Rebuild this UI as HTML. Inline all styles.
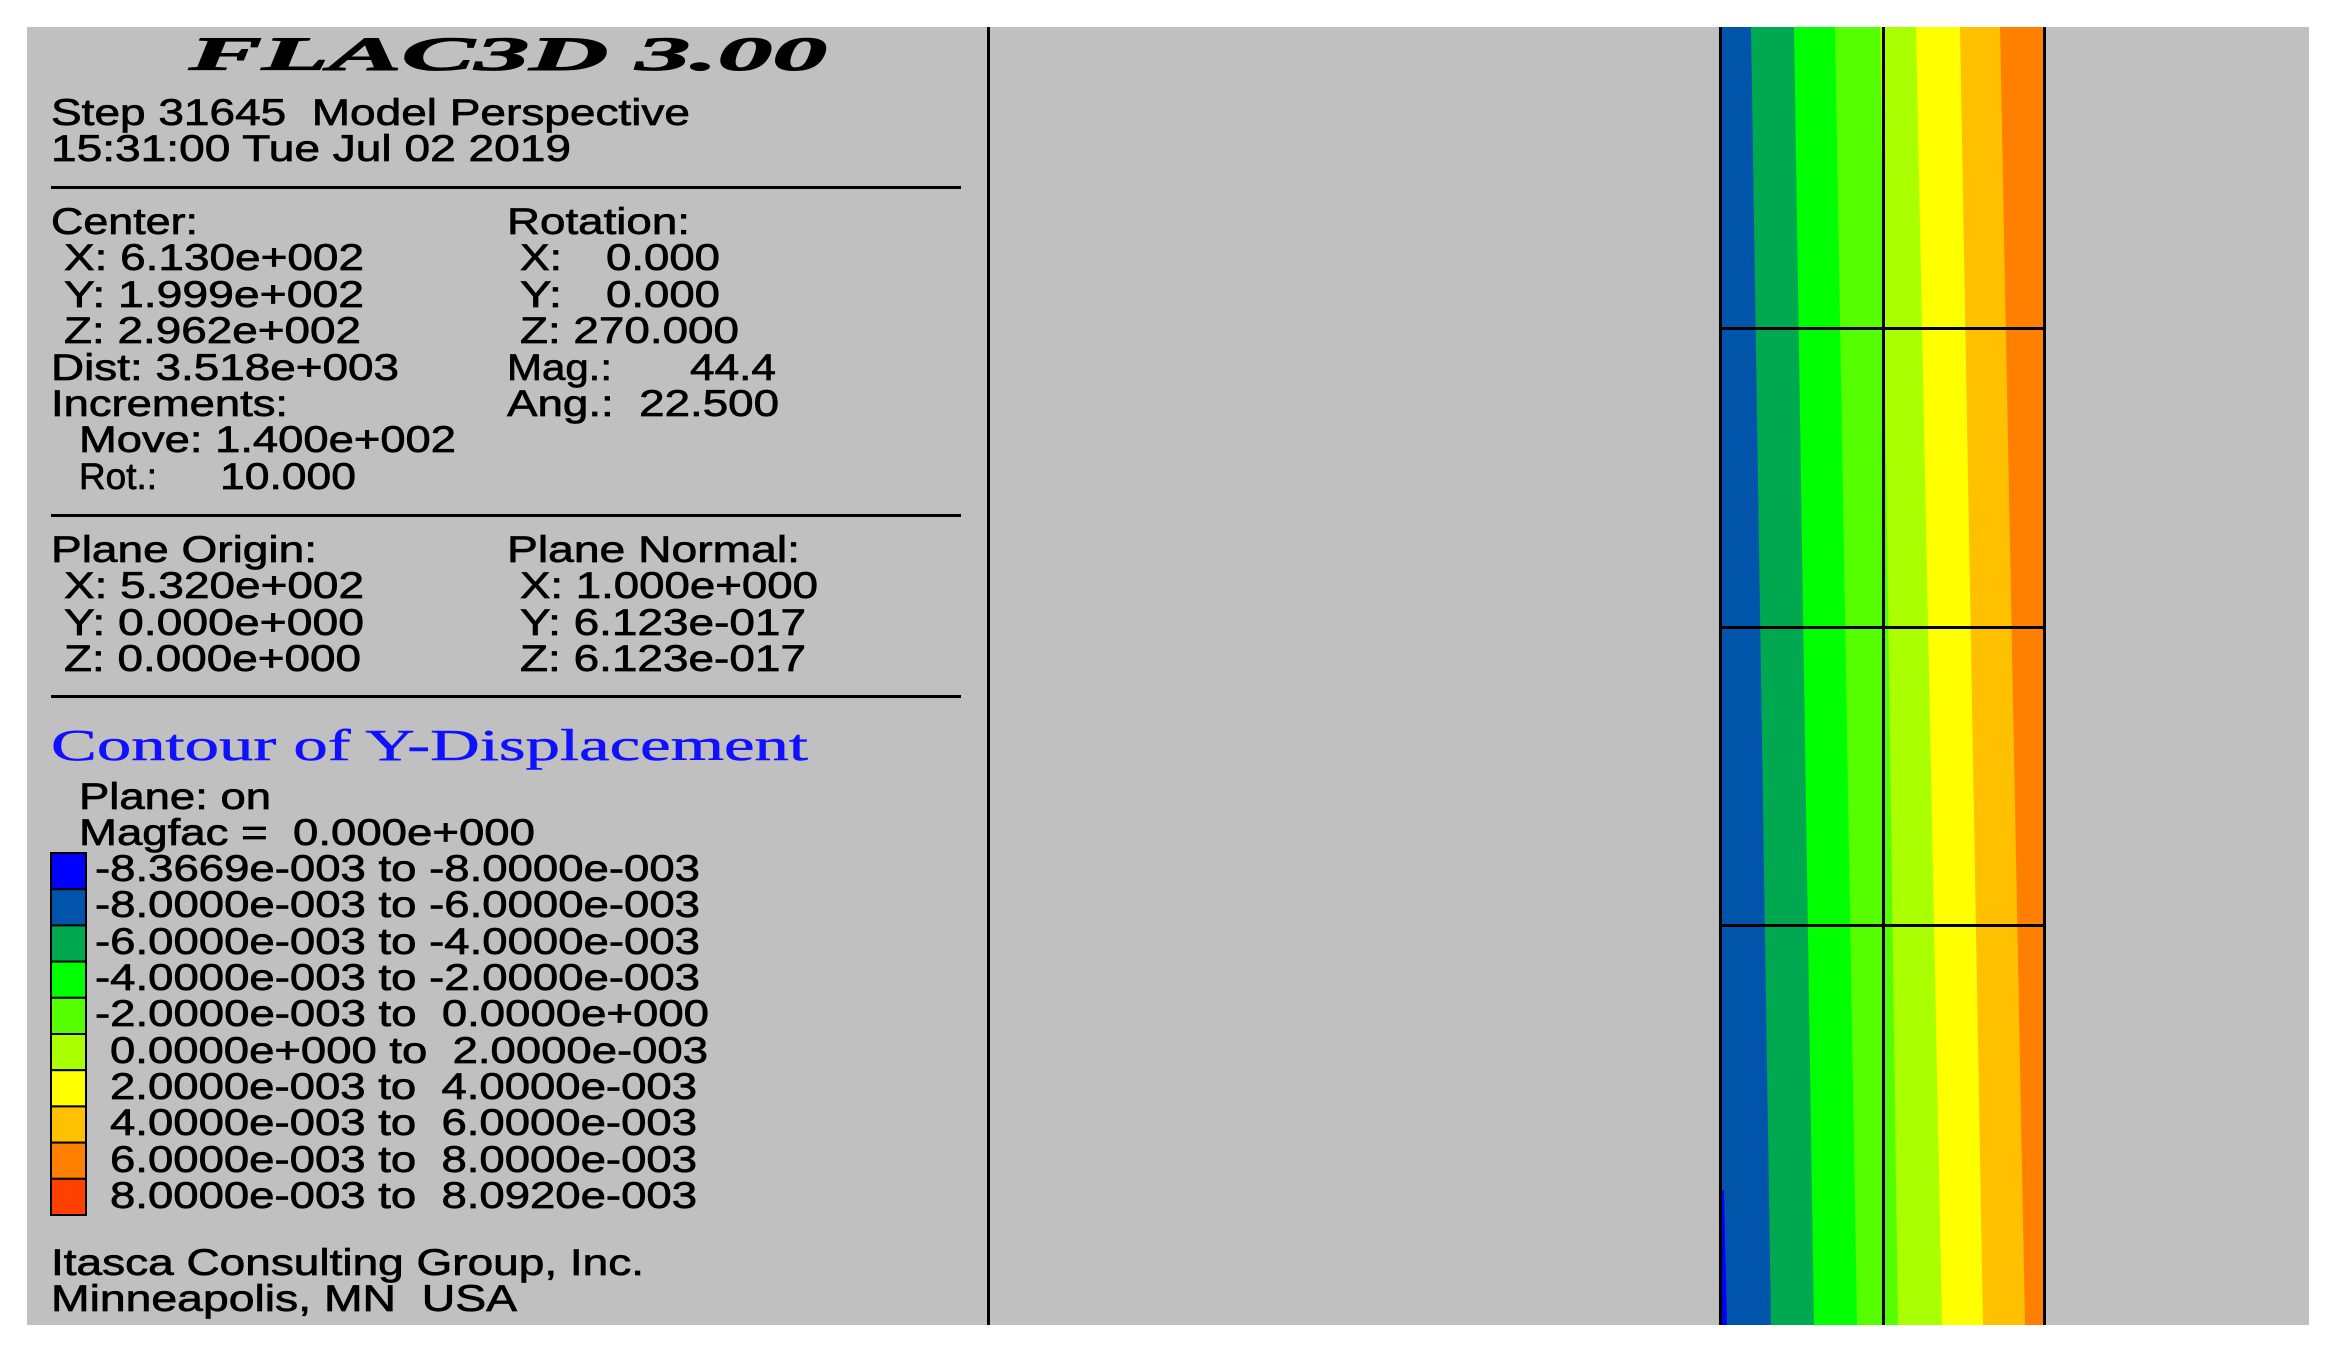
<!DOCTYPE html>
<html><head><meta charset="utf-8"><style>
html,body{margin:0;padding:0;background:#fff;width:2336px;height:1356px;overflow:hidden}
svg{display:block}
text{font-family:"Liberation Sans",Arial,sans-serif;font-size:37px;fill:#000;stroke:#000;stroke-width:0.7px}
.s{font-family:"Liberation Serif","Times New Roman",serif}
</style></head><body>
<svg width="2336" height="1356" viewBox="0 0 2336 1356" xmlns="http://www.w3.org/2000/svg">
<rect x="0" y="0" width="2336" height="1356" fill="#fff"/>
<rect x="27" y="27" width="2282" height="1298" fill="#c0c0c0"/>
<rect x="987" y="27" width="3" height="1298" fill="#000"/>
<polygon points="1721,27 2045,27 2045,1325 1721,1325" fill="#ff8000"/>
<polygon points="1721,27 2000,27 2025,1325 1721,1325" fill="#ffc000"/>
<polygon points="1721,27 1960,27 1983,1325 1721,1325" fill="#ffff00"/>
<polygon points="1721,27 1916,27 1942,1325 1721,1325" fill="#aaff00"/>
<polygon points="1721,27 1880,27 1898,1325 1721,1325" fill="#55ff00"/>
<polygon points="1721,27 1835,27 1857,1325 1721,1325" fill="#00ff00"/>
<polygon points="1721,27 1794,27 1814,1325 1721,1325" fill="#00a850"/>
<polygon points="1721,27 1751,27 1771,1325 1721,1325" fill="#0055aa"/>
<polygon points="1721,1190 1724,1190 1727,1325 1721,1325" fill="#0000ff"/>
<rect x="1719" y="27" width="3" height="1298" fill="#000"/>
<rect x="1882" y="27" width="3" height="1298" fill="#000"/>
<rect x="2043" y="27" width="3" height="1298" fill="#000"/>
<rect x="1719" y="327" width="327" height="3" fill="#000"/>
<rect x="1719" y="626" width="327" height="3" fill="#000"/>
<rect x="1719" y="924" width="327" height="3" fill="#000"/>
<rect x="51" y="186" width="910" height="3" fill="#000"/>
<rect x="51" y="514" width="910" height="3" fill="#000"/>
<rect x="51" y="695" width="910" height="3" fill="#000"/>
<text class="s" x="189" y="70" style="font-size:48px;font-weight:bold;font-style:italic;stroke-width:1px" textLength="638" lengthAdjust="spacingAndGlyphs">FLAC3D 3.00</text>
<text x="51" y="125" textLength="639" lengthAdjust="spacingAndGlyphs" xml:space="preserve">Step 31645  Model Perspective</text>
<text x="51" y="161" textLength="520" lengthAdjust="spacingAndGlyphs">15:31:00 Tue Jul 02 2019</text>
<text x="51" y="234" textLength="147" lengthAdjust="spacingAndGlyphs">Center:</text>
<text x="64" y="270" textLength="300" lengthAdjust="spacingAndGlyphs">X: 6.130e+002</text>
<text x="64" y="307" textLength="300" lengthAdjust="spacingAndGlyphs">Y: 1.999e+002</text>
<text x="64" y="343" textLength="297" lengthAdjust="spacingAndGlyphs">Z: 2.962e+002</text>
<text x="51" y="380" textLength="348" lengthAdjust="spacingAndGlyphs">Dist: 3.518e+003</text>
<text x="51" y="416" textLength="237" lengthAdjust="spacingAndGlyphs">Increments:</text>
<text x="79" y="452" textLength="377" lengthAdjust="spacingAndGlyphs">Move: 1.400e+002</text>
<text x="79" y="489" textLength="78" lengthAdjust="spacingAndGlyphs">Rot.:</text>
<text x="220" y="489" textLength="136" lengthAdjust="spacingAndGlyphs">10.000</text>
<text x="507" y="234" textLength="183" lengthAdjust="spacingAndGlyphs">Rotation:</text>
<text x="520" y="270" textLength="42" lengthAdjust="spacingAndGlyphs">X:</text>
<text x="606" y="270" textLength="114" lengthAdjust="spacingAndGlyphs">0.000</text>
<text x="520" y="307" textLength="42" lengthAdjust="spacingAndGlyphs">Y:</text>
<text x="606" y="307" textLength="114" lengthAdjust="spacingAndGlyphs">0.000</text>
<text x="520" y="343" textLength="219" lengthAdjust="spacingAndGlyphs">Z: 270.000</text>
<text x="507" y="380" textLength="105" lengthAdjust="spacingAndGlyphs">Mag.:</text>
<text x="690" y="380" textLength="86" lengthAdjust="spacingAndGlyphs">44.4</text>
<text x="507" y="416" textLength="272" lengthAdjust="spacingAndGlyphs" xml:space="preserve">Ang.:  22.500</text>
<text x="51" y="562" textLength="266" lengthAdjust="spacingAndGlyphs">Plane Origin:</text>
<text x="64" y="598" textLength="300" lengthAdjust="spacingAndGlyphs">X: 5.320e+002</text>
<text x="64" y="635" textLength="300" lengthAdjust="spacingAndGlyphs">Y: 0.000e+000</text>
<text x="64" y="671" textLength="297" lengthAdjust="spacingAndGlyphs">Z: 0.000e+000</text>
<text x="507" y="562" textLength="293" lengthAdjust="spacingAndGlyphs">Plane Normal:</text>
<text x="520" y="598" textLength="298" lengthAdjust="spacingAndGlyphs">X: 1.000e+000</text>
<text x="520" y="635" textLength="286" lengthAdjust="spacingAndGlyphs">Y: 6.123e-017</text>
<text x="520" y="671" textLength="286" lengthAdjust="spacingAndGlyphs">Z: 6.123e-017</text>
<text class="s" x="51" y="760" style="font-size:44px;fill:#1010ff;stroke:#1010ff;stroke-width:0.5px" textLength="757" lengthAdjust="spacingAndGlyphs">Contour of Y-Displacement</text>
<text x="79" y="809" textLength="192" lengthAdjust="spacingAndGlyphs">Plane: on</text>
<text x="79" y="845" textLength="456" lengthAdjust="spacingAndGlyphs" xml:space="preserve">Magfac =  0.000e+000</text>
<g stroke="#000" stroke-width="2">
<rect x="51" y="853" width="35" height="36.2" fill="#0000ff"/>
<rect x="51" y="889.2" width="35" height="36.2" fill="#0055aa"/>
<rect x="51" y="925.4" width="35" height="36.2" fill="#00a850"/>
<rect x="51" y="961.6" width="35" height="36.2" fill="#00ff00"/>
<rect x="51" y="997.8" width="35" height="36.2" fill="#55ff00"/>
<rect x="51" y="1034" width="35" height="36.2" fill="#aaff00"/>
<rect x="51" y="1070.2" width="35" height="36.2" fill="#ffff00"/>
<rect x="51" y="1106.4" width="35" height="36.2" fill="#ffc000"/>
<rect x="51" y="1142.6" width="35" height="36.2" fill="#ff8000"/>
<rect x="51" y="1178.8" width="35" height="36.2" fill="#ff4000"/>
</g>
<text x="95" y="881" textLength="605" lengthAdjust="spacingAndGlyphs">-8.3669e-003 to -8.0000e-003</text>
<text x="95" y="917" textLength="605" lengthAdjust="spacingAndGlyphs">-8.0000e-003 to -6.0000e-003</text>
<text x="95" y="954" textLength="605" lengthAdjust="spacingAndGlyphs">-6.0000e-003 to -4.0000e-003</text>
<text x="95" y="990" textLength="605" lengthAdjust="spacingAndGlyphs">-4.0000e-003 to -2.0000e-003</text>
<text x="95" y="1026" textLength="614" lengthAdjust="spacingAndGlyphs" xml:space="preserve">-2.0000e-003 to  0.0000e+000</text>
<text x="110" y="1063" textLength="598" lengthAdjust="spacingAndGlyphs" xml:space="preserve">0.0000e+000 to  2.0000e-003</text>
<text x="110" y="1099" textLength="587" lengthAdjust="spacingAndGlyphs" xml:space="preserve">2.0000e-003 to  4.0000e-003</text>
<text x="110" y="1135" textLength="587" lengthAdjust="spacingAndGlyphs" xml:space="preserve">4.0000e-003 to  6.0000e-003</text>
<text x="110" y="1172" textLength="587" lengthAdjust="spacingAndGlyphs" xml:space="preserve">6.0000e-003 to  8.0000e-003</text>
<text x="110" y="1208" textLength="587" lengthAdjust="spacingAndGlyphs" xml:space="preserve">8.0000e-003 to  8.0920e-003</text>
<text x="51" y="1275" textLength="593" lengthAdjust="spacingAndGlyphs">Itasca Consulting Group, Inc.</text>
<text x="51" y="1311" textLength="466" lengthAdjust="spacingAndGlyphs" xml:space="preserve">Minneapolis, MN  USA</text>
</svg>
</body></html>
